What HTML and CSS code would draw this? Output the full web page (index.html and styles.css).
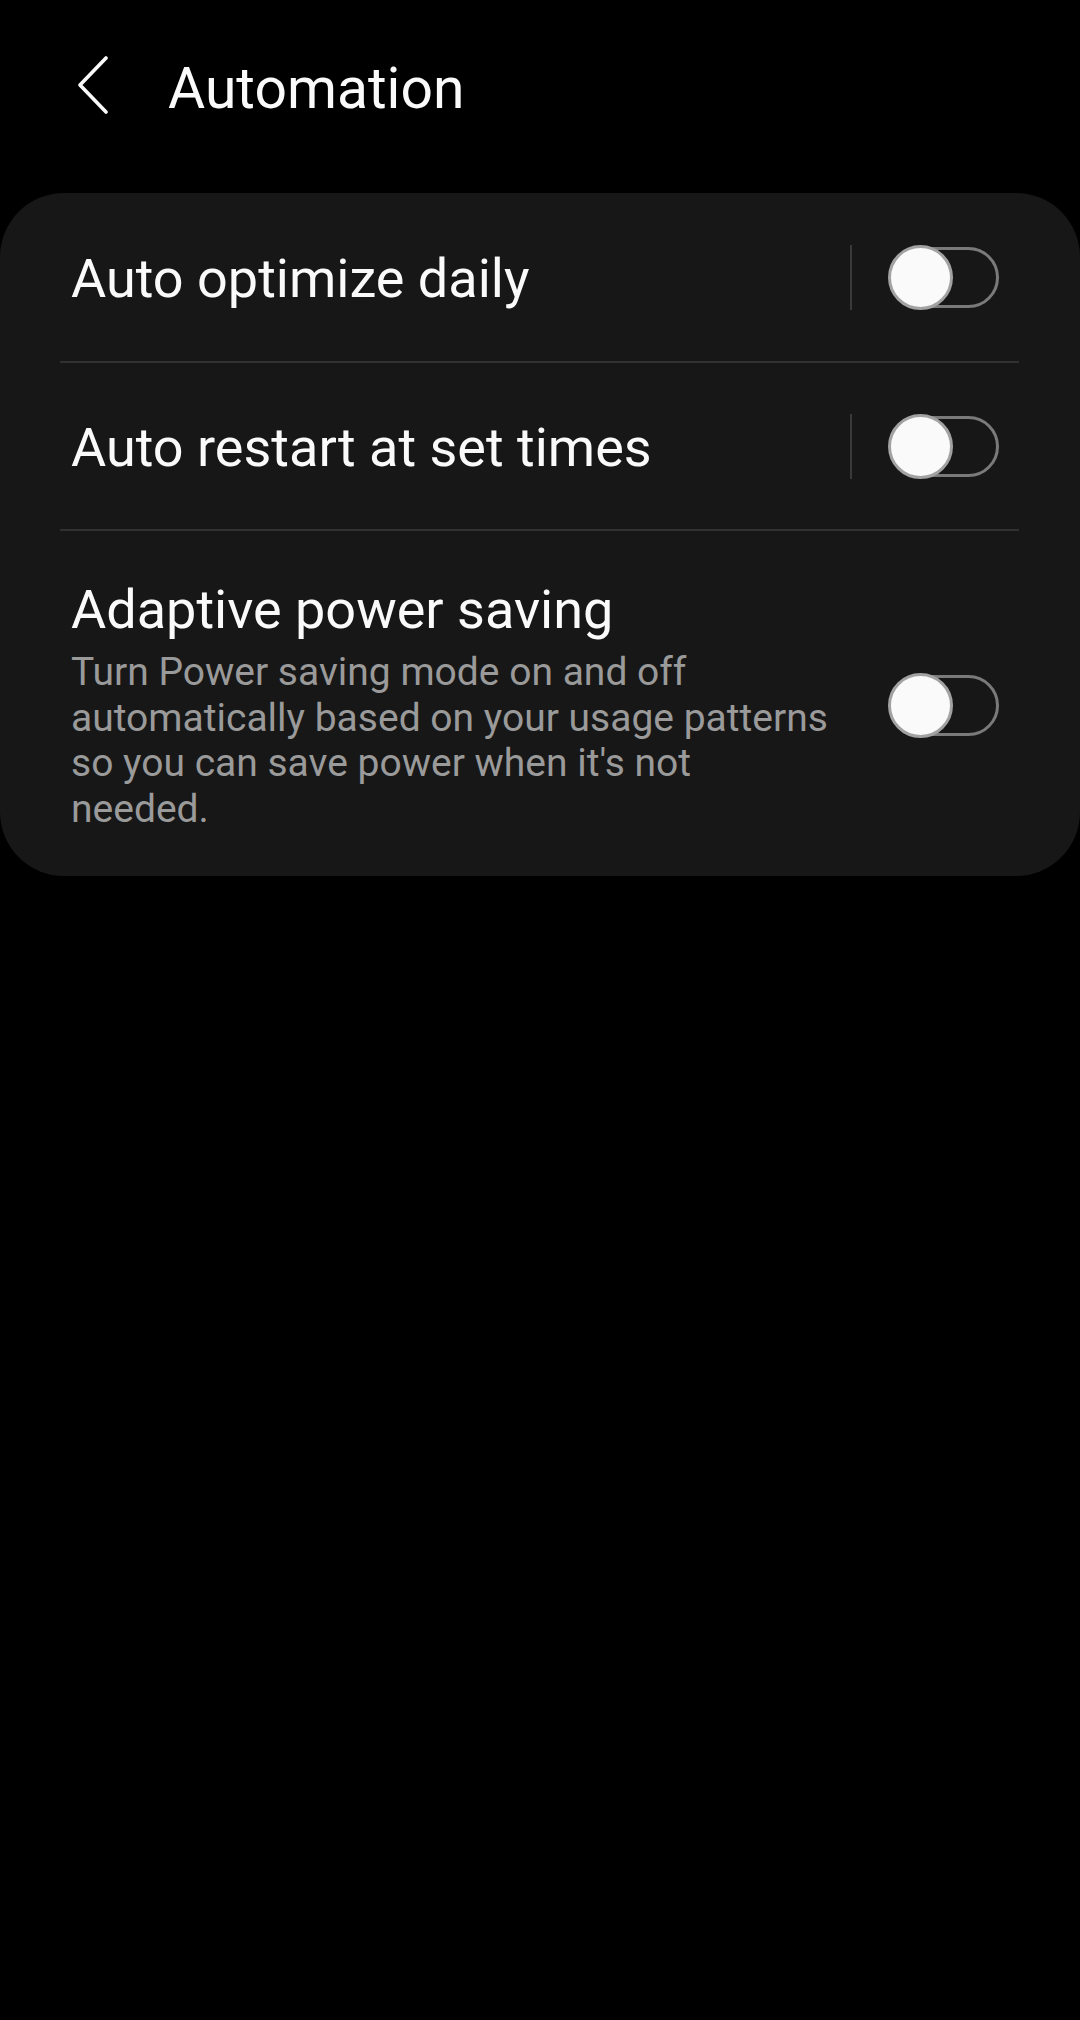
FILE: index.html
```html
<!DOCTYPE html>
<html lang="en">
<head>
<meta charset="utf-8">
<title>Automation</title>
<link rel="stylesheet" href="styles.css">
</head>
<body>
<header class="appbar">
  <button class="back" aria-label="Back">
    <svg width="32" height="58" viewBox="0 0 32 58"><polyline points="28,2 2,29 28,56" fill="none" stroke="#fafafa" stroke-width="3.6" stroke-linecap="round" stroke-linejoin="round"/></svg>
  </button>
  <h1 class="title">Automation</h1>
</header>
<main class="card">
  <div class="row row-first">
    <div class="row-text"><div class="row-title">Auto optimize daily</div></div>
    <div class="vsep"></div>
    <div class="switch"><span class="track"></span><span class="thumb"></span></div>
  </div>
  <div class="divider"></div>
  <div class="row">
    <div class="row-text"><div class="row-title">Auto restart at set times</div></div>
    <div class="vsep"></div>
    <div class="switch"><span class="track"></span><span class="thumb"></span></div>
  </div>
  <div class="divider"></div>
  <div class="row row-tall">
    <div class="row-text">
      <div class="row-title">Adaptive power saving</div>
      <div class="row-sub">Turn Power saving mode on and off automatically based on your usage patterns so you can save power when it's not needed.</div>
    </div>
    <div class="switch switch-nosep"><span class="track"></span><span class="thumb"></span></div>
  </div>
</main>
</body>
</html>
```
FILE: styles.css
```css
html, body {
  margin: 0;
  padding: 0;
  background: #000;
}
body {
  width: 1080px;
  height: 2020px;
  font-family: Roboto, "Noto Sans", "Liberation Sans", sans-serif;
  color: #fafafa;
}
.appbar {
  display: flex;
  align-items: center;
  height: 178px;
  margin-bottom: 15px;
}
.back {
  background: none;
  border: 0;
  padding: 0;
  margin-left: 78px;
  width: 32px;
  height: 58px;
  display: flex;
  margin-top: -8px;
}
.title {
  margin: 0 0 0 58px;
  font-size: 57px;
  font-weight: 400;
  line-height: 64px;
  letter-spacing: 0;
}
.card {
  background: #171717;
  border-radius: 64px;
  padding-bottom: 0;
}
.row {
  display: flex;
  align-items: center;
  height: 166px;
  padding: 0 81px 0 71px;
}
.row-first {
  height: 168px;
}
.row-tall {
  height: auto;
  padding-top: 47px;
  padding-bottom: 43px;
}
.row-text {
  flex: 1;
  min-width: 0;
}
.row-title {
  font-size: 54px;
  line-height: 64px;
  padding-top: 3px;
}
.row-tall .row-title {
  padding-top: 0;
}
.row-sub {
  font-size: 39px;
  line-height: 45.7px;
  color: #9a9a9a;
  margin-top: 8px;
  width: 762px;
}
.vsep {
  width: 2px;
  height: 65px;
  background: #3a3a3a;
  margin-right: 36px;
}
.switch {
  position: relative;
  width: 111px;
  height: 65px;
  flex: none;
}
.track {
  position: absolute;
  left: 6px;
  right: 0;
  top: 2px;
  height: 61px;
  box-sizing: border-box;
  border: 3px solid #7a7a7a;
  border-radius: 31px;
}
.thumb {
  position: absolute;
  left: 0;
  top: 0;
  width: 65px;
  height: 65px;
  box-sizing: border-box;
  border-radius: 50%;
  background: #fafafa;
  border: 3px solid #a2a2a2;
}
.divider {
  height: 2px;
  background: #313131;
  margin: 0 61px 0 60px;
}
```
